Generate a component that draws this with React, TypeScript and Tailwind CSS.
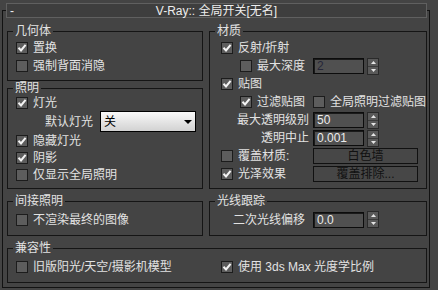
import type { ReactNode } from "react";
import clsx from "clsx";

function Check({ on }: { on?: boolean }) {
  return (
    <span className="flex h-[12px] w-[12px] shrink-0 items-center justify-center border border-[#1c1c1c] bg-[#5d5d5d]">
      {on && (
        <svg width="10" height="10" viewBox="0 0 10 10">
          <path d="M1.5 4.8 L4 7.4 L8.6 1.8" fill="none" stroke="#f4f4f4" strokeWidth="2" />
        </svg>
      )}
    </span>
  );
}

function Option({
  label,
  on,
  className,
}: {
  label: ReactNode;
  on?: boolean;
  className?: string;
}) {
  return (
    <div className={clsx("flex items-center gap-[5px] whitespace-nowrap", className)}>
      <Check on={on} />
      <span>{label}</span>
    </div>
  );
}

function Spinner({ value, disabled }: { value: string; disabled?: boolean }) {
  return (
    <div className="flex items-center gap-[3px]">
      <div
        className={clsx(
          "flex h-[16px] w-[51px] items-center border border-[#0c0c0c] bg-[#505050] pl-[3px] shadow-[inset_1px_1px_0_#1a1a1a]",
          disabled ? "text-[#262638]" : "text-[#ececec]",
        )}
      >
        {value}
      </div>
      <div className="flex h-[17px] w-[12px] flex-col border border-[#2a2a2a] bg-[#595959]">
        <div className="flex flex-1 items-center justify-center border-b border-[#3a3a3a]">
          <svg width="5" height="3" viewBox="0 0 5 3">
            <path d="M0 3 L2.5 0 L5 3Z" fill="#e6e6e6" />
          </svg>
        </div>
        <div className="flex flex-1 items-center justify-center">
          <svg width="5" height="3" viewBox="0 0 5 3">
            <path d="M0 0 L2.5 3 L5 0Z" fill="#e6e6e6" />
          </svg>
        </div>
      </div>
    </div>
  );
}

function Button({ children }: { children: ReactNode }) {
  return (
    <div className="flex h-[16px] w-[105px] items-center justify-center border border-[#111] bg-[#474747] text-[#111]">
      {children}
    </div>
  );
}

function Group({
  title,
  className,
  children,
}: {
  title: string;
  className?: string;
  children: ReactNode;
}) {
  return (
    <fieldset className={clsx("min-w-0 border border-[#151515]", className)}>
      <legend className="ml-[5px] px-[2px] leading-[14px]">{title}</legend>
      {children}
    </fieldset>
  );
}

export default function App() {
  return (
    <div className="h-[290px] w-[438px] overflow-hidden bg-[#444444] pt-[3px] text-[12px] leading-[14px] text-[#e2e2e2] [font-family:'Liberation_Sans','Noto_Sans_CJK_SC',sans-serif]">
      {/* rollout title */}
      <div className="relative z-10 ml-[6px] grid h-[15px] w-[421px] grid-cols-[20px_1fr_20px] items-center border border-[#606060] bg-[#3e3e3e] text-[#ededed]">
        <span className="pl-[3px]">-</span>
        <span className="text-center">V-Ray:: 全局开关[无名]</span>
        <span />
      </div>

      <div className="-mt-[8px] ml-[2px] w-[428px] border border-[#121212] pb-[4px] pl-[4px] pr-[2px] pt-[13px]">
        <div className="grid grid-cols-[196px_218px] gap-x-[6px]">
          <div className="flex flex-col">
            <Group title="几何体">
              <div className="h-[42px] pl-[8px] pt-[1px]">
                <Option on label="置换" className="h-[18px]" />
                <Option label="强制背面消隐" className="h-[18px]" />
              </div>
            </Group>
            <Group title="照明">
              <div className="h-[93px] pl-[8px]">
                <Option on label="灯光" className="h-[16px]" />
                <div className="flex h-[21px] items-center gap-[7px] pl-[29px]">
                  <span>默认灯光</span>
                  <div className="flex h-[21px] w-[96px] items-center justify-between border border-black bg-gradient-to-b from-[#f9f9f9] to-[#d2d2d2] pl-[3px] pr-[3px] text-black">
                    <span>关</span>
                    <svg width="8" height="4" viewBox="0 0 8 4">
                      <path d="M0 0 L8 0 L4 4Z" fill="#000" />
                    </svg>
                  </div>
                </div>
                <Option on label="隐藏灯光" className="h-[17px]" />
                <Option on label="阴影" className="h-[17px]" />
                <Option label="仅显示全局照明" className="h-[17px]" />
              </div>
            </Group>
          </div>

          <Group title="材质">
            <div className="h-[150px] pt-[1px]">
              <div className="flex h-[18px] items-center pl-[11px]">
                <Option on label="反射/折射" />
              </div>
              <div className="flex h-[18px] items-center">
                <div className="w-[103px] pl-[30px]">
                  <Option label="最大深度" />
                </div>
                <Spinner value="2" disabled />
              </div>
              <div className="flex h-[18px] items-center pl-[11px]">
                <Option on label="贴图" />
              </div>
              <div className="flex h-[18px] items-center">
                <div className="w-[103px] pl-[30px]">
                  <Option on label="过滤贴图" />
                </div>
                <Option label="全局照明过滤贴图" />
              </div>
              <div className="flex h-[18px] items-center">
                <div className="w-[103px] pr-[4px] text-right">最大透明级别</div>
                <Spinner value="50" />
              </div>
              <div className="flex h-[18px] items-center">
                <div className="w-[103px] pr-[4px] text-right">透明中止</div>
                <Spinner value="0.001" />
              </div>
              <div className="flex h-[18px] items-center">
                <div className="w-[103px] pl-[11px]">
                  <Option label="覆盖材质:" />
                </div>
                <Button>白色墙</Button>
              </div>
              <div className="flex h-[18px] items-center">
                <div className="w-[103px] pl-[11px]">
                  <Option on label="光泽效果" />
                </div>
                <Button>覆盖排除...</Button>
              </div>
            </div>
          </Group>
        </div>

        <div className="mt-[5px] grid grid-cols-[196px_218px] gap-x-[6px]">
          <Group title="间接照明">
            <div className="h-[27px] pl-[8px] pt-[3px]">
              <Option label="不渲染最终的图像" className="h-[17px]" />
            </div>
          </Group>
          <Group title="光线跟踪">
            <div className="h-[27px] pt-[3px]">
              <div className="flex h-[17px] items-center">
                <div className="w-[103px] pr-[8px] text-right">二次光线偏移</div>
                <Spinner value="0.0" />
              </div>
            </div>
          </Group>
        </div>

        <Group title="兼容性" className="mt-[5px]">
          <div className="h-[27px] pl-[8px] pt-[3px]">
            <div className="flex h-[17px] items-center">
              <Option label="旧版阳光/天空/摄影机模型" className="w-[205px]" />
              <Option on label="使用 3ds Max 光度学比例" />
            </div>
          </div>
        </Group>
      </div>
    </div>
  );
}
